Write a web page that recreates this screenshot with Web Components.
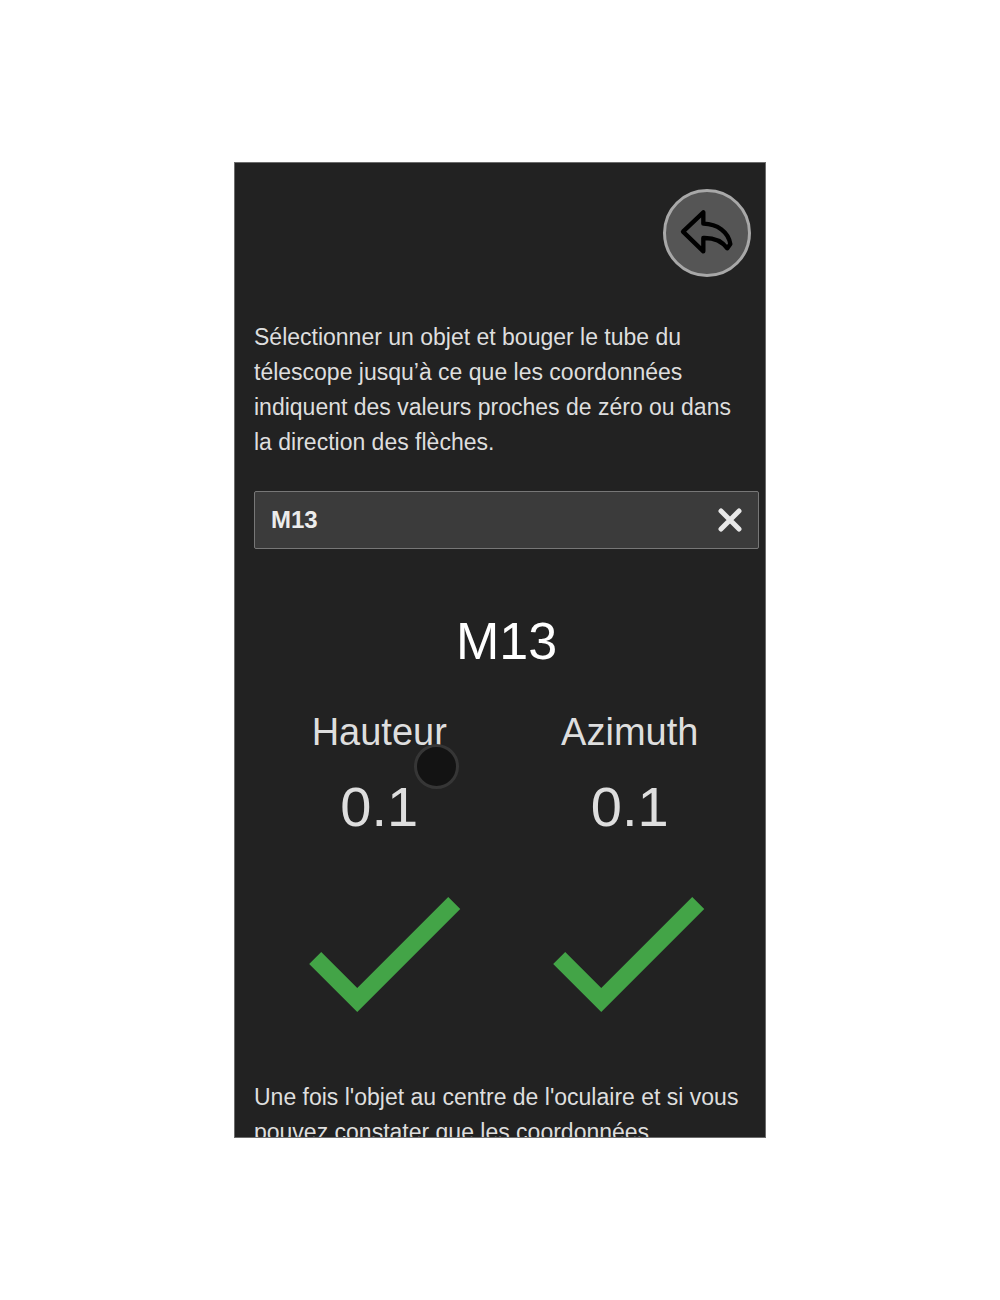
<!DOCTYPE html>
<html lang="fr">
<head>
<meta charset="utf-8">
<meta name="viewport" content="width=device-width, initial-scale=1">
<title>Alignement</title>
<style>
  body {
    margin: 0;
    background: #fff;
    color: #dedede;
    font-family: "Liberation Sans", Arial, sans-serif;
  }
</style>
</head>
<body>
<scope-screen>
  <back-button slot="top"></back-button>
  <help-text>Sélectionner un objet et bouger le tube du télescope jusqu’à ce que les coordonnées indiquent des valeurs proches de zéro ou dans la direction des flèches.</help-text>
  <object-search value="M13"></object-search>
  <object-readings name="M13">
    <coord-value label="Hauteur" value="0.1" touched></coord-value>
    <coord-value label="Azimuth" value="0.1"></coord-value>
    <check-mark slot="status"></check-mark>
    <check-mark slot="status"></check-mark>
  </object-readings>
  <help-text>Une fois l'objet au centre de l'oculaire et si vous pouvez constater que les coordonnées</help-text>
</scope-screen>

<script>
class ScopeScreen extends HTMLElement {
  constructor() {
    super();
    this.attachShadow({ mode: 'open' });
    this.shadowRoot.innerHTML = `
      <style>
        :host {
          display: flex;
          justify-content: center;
          box-sizing: border-box;
          height: 100vh;
          padding: 162px 16px;
        }

        main {
          box-sizing: border-box;
          width: 100%;
          max-width: 532px;
          border: 1px solid #6c6c6c;
          background: #222;
          overflow: hidden;
        }

        header {
          display: flex;
          justify-content: flex-end;
          padding: 26px 14px 43px;
        }

        .content {
          padding: 0 6px 0 19px;
        }
      </style>
      <main>
        <header><slot name="top"></slot></header>
        <div class="content"><slot></slot></div>
      </main>
    `;
  }
}

class BackButton extends HTMLElement {
  constructor() {
    super();
    this.attachShadow({ mode: 'open' });
    this.shadowRoot.innerHTML = `
      <style>
        :host {
          display: block;
        }

        button {
          display: block;
          width: 88px;
          height: 88px;
          padding: 0;
          border: 3px solid #a8a8a8;
          border-radius: 50%;
          background: #555;
        }

        svg {
          display: block;
          width: 100%;
        }
      </style>
      <button type="button" aria-label="Retour">
        <svg viewBox="9 9 246 246" fill="none" stroke="#000" stroke-width="13" stroke-linejoin="round">
          <path d="M60 128 L121 70 V104 C164 105 196 129 202 165 L193 178 C175 154 153 146 121 147 V187 Z"/>
        </svg>
      </button>
    `;
  }
}

class HelpText extends HTMLElement {
  constructor() {
    super();
    this.attachShadow({ mode: 'open' });
    this.shadowRoot.innerHTML = `
      <style>
        :host {
          display: block;
          padding-right: 8px;
        }

        p {
          margin: 0;
          font-size: 23px;
          line-height: 35px;
        }
      </style>
      <p><slot></slot></p>
    `;
  }
}

class ObjectSearch extends HTMLElement {
  constructor() {
    super();
    this.attachShadow({ mode: 'open' });
    this.shadowRoot.innerHTML = `
      <style>
        :host {
          display: block;
          margin-top: 31px;
        }

        form {
          display: flex;
          align-items: center;
          box-sizing: border-box;
          height: 58px;
          padding: 0 16px;
          border: 1px solid #777;
          border-radius: 2px;
          background: #3b3b3b;
        }

        input {
          flex: 1;
          min-width: 0;
          padding: 0;
          border: 0;
          outline: 0;
          background: none;
          color: #ececec;
          font: bold 24px "Liberation Sans", Arial, sans-serif;
        }

        button {
          padding: 0;
          border: 0;
          background: none;
        }

        svg {
          display: block;
          width: 24px;
          height: 24px;
        }
      </style>
      <form>
        <input type="text" aria-label="Objet">
        <button type="button" aria-label="Effacer">
          <svg viewBox="0 0 24 24" stroke="#e8e8e8" stroke-width="5" stroke-linecap="round">
            <path d="M3 3 L21 21 M21 3 L3 21"/>
          </svg>
        </button>
      </form>
    `;
    this.input = this.shadowRoot.querySelector('input');
  }

  connectedCallback() {
    this.input.value = this.getAttribute('value') || '';
    this.shadowRoot.querySelector('button').addEventListener('click', () => {
      this.input.value = '';
      this.input.focus();
    });
  }
}

class ObjectReadings extends HTMLElement {
  constructor() {
    super();
    this.attachShadow({ mode: 'open' });
    this.shadowRoot.innerHTML = `
      <style>
        :host {
          display: block;
          margin: 60px 0 25px;
        }

        h1 {
          margin: 0 0 35px;
          color: #fff;
          font-size: 52px;
          font-weight: normal;
          line-height: 64px;
          text-align: center;
        }

        .coords,
        .status {
          padding-right: 4px;
        }

        .coords {
          display: grid;
          grid-template-columns: 1fr 1fr;
        }

        .status {
          display: flex;
          justify-content: center;
          gap: 38px;
          margin-top: 6px;
        }
      </style>
      <h1></h1>
      <div class="coords"><slot></slot></div>
      <div class="status"><slot name="status"></slot></div>
    `;
  }

  connectedCallback() {
    this.shadowRoot.querySelector('h1').textContent = this.getAttribute('name');
  }
}

class CoordValue extends HTMLElement {
  constructor() {
    super();
    this.attachShadow({ mode: 'open' });
    this.shadowRoot.innerHTML = `
      <style>
        :host {
          display: flex;
          flex-direction: column;
          gap: 15px;
          position: relative;
          text-align: center;
        }

        .label {
          font-size: 38px;
          line-height: 48px;
        }

        .value {
          font-size: 56px;
          line-height: 72px;
        }

        /* touch pointer, floats over the texts */
        .touch {
          display: none;
          position: absolute;
          top: 36px;
          right: 46px;
          box-sizing: border-box;
          width: 45px;
          height: 45px;
          border: 3px solid #363636;
          border-radius: 50%;
          background: #131313;
        }

        :host([touched]) .touch {
          display: block;
        }
      </style>
      <div class="label"></div>
      <div class="value"></div>
      <div class="touch"></div>
    `;
  }

  connectedCallback() {
    this.shadowRoot.querySelector('.label').textContent = this.getAttribute('label');
    this.shadowRoot.querySelector('.value').textContent = this.getAttribute('value');
  }
}

class CheckMark extends HTMLElement {
  constructor() {
    super();
    this.attachShadow({ mode: 'open' });
    this.shadowRoot.innerHTML = `
      <style>
        :host {
          display: block;
          width: 206px;
        }

        svg {
          display: block;
          width: 100%;
        }
      </style>
      <svg viewBox="0 0 24 24" fill="#43a447" aria-hidden="true">
        <path d="M9 16.2 L4.8 12 L3.4 13.4 L9 19 L21 7 L19.6 5.6 Z"/>
      </svg>
    `;
  }
}

customElements.define('scope-screen', ScopeScreen);
customElements.define('back-button', BackButton);
customElements.define('help-text', HelpText);
customElements.define('object-search', ObjectSearch);
customElements.define('object-readings', ObjectReadings);
customElements.define('coord-value', CoordValue);
customElements.define('check-mark', CheckMark);
</script>
</body>
</html>
